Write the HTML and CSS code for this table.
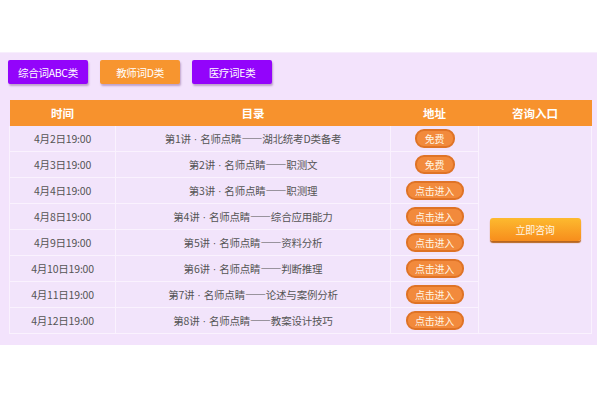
FILE: index.html
```html
<!DOCTYPE html>
<html lang="zh">
<head>
<meta charset="utf-8">
<link rel="stylesheet" href="styles.css">
</head>
<body>
<div class="page">
  <div class="panel">
    <div class="tabs">
      <span class="tab tab-purple">综合词ABC类</span>
      <span class="tab tab-orange">教师词D类</span>
      <span class="tab tab-purple">医疗词E类</span>
    </div>
    <table class="schedule">
      <colgroup>
        <col class="c-time"><col class="c-title"><col class="c-addr"><col class="c-consult">
      </colgroup>
      <thead>
        <tr><th>时间</th><th>目录</th><th>地址</th><th>咨询入口</th></tr>
      </thead>
      <tbody>
        <tr><td>4月2日19:00</td><td>第1讲<span class="dot"> · </span>名师点睛——湖北统考D类备考</td><td><span class="pill pill-free">免费</span></td><td class="consult" rowspan="8"><span class="ask">立即咨询</span></td></tr>
        <tr><td>4月3日19:00</td><td>第2讲<span class="dot"> · </span>名师点睛——职测文</td><td><span class="pill pill-free">免费</span></td></tr>
        <tr><td>4月4日19:00</td><td>第3讲<span class="dot"> · </span>名师点睛——职测理</td><td><span class="pill">点击进入</span></td></tr>
        <tr><td>4月8日19:00</td><td>第4讲<span class="dot"> · </span>名师点睛——综合应用能力</td><td><span class="pill">点击进入</span></td></tr>
        <tr><td>4月9日19:00</td><td>第5讲<span class="dot"> · </span>名师点睛——资料分析</td><td><span class="pill">点击进入</span></td></tr>
        <tr><td>4月10日19:00</td><td>第6讲<span class="dot"> · </span>名师点睛——判断推理</td><td><span class="pill">点击进入</span></td></tr>
        <tr><td>4月11日19:00</td><td>第7讲<span class="dot"> · </span>名师点睛——论述与案例分析</td><td><span class="pill">点击进入</span></td></tr>
        <tr><td>4月12日19:00</td><td>第8讲<span class="dot"> · </span>名师点睛——教案设计技巧</td><td><span class="pill">点击进入</span></td></tr>
      </tbody>
    </table>
  </div>
</div>
</body>
</html>
```

FILE: styles.css
```css
html, body {
  margin: 0;
  padding: 0;
  background: #ffffff;
}
body {
  font-family: "Noto Sans CJK SC", "Noto Sans", sans-serif;
  width: 600px;
  height: 400px;
  overflow: hidden;
}
.page {
  padding-top: 52px;
}
.panel {
  width: 597px;
  height: 293px;
  box-sizing: border-box;
  background: #f3e3fc;
  padding: 7px 6px 0 9px;
  border-top: 1px solid #f7eefd;
}
.tabs {
  display: flex;
  gap: 12px;
  margin-left: -1px;
}
.tab {
  width: 80px;
  height: 24px;
  display: flex;
  align-items: center;
  justify-content: center;
  font-size: 10.5px;
  color: #ffffff;
  box-shadow: 1px 2px 2px rgba(90, 40, 110, 0.35);
  border-radius: 2px;
  letter-spacing: -0.3px;
}
.tab-purple {
  background: #9304fb;
}
.tab-orange {
  background: #f7952f;
}
.schedule {
  margin-top: 16px;
  width: 582px;
  border-collapse: collapse;
  table-layout: fixed;
  font-size: 10.5px;
  color: #555555;
}
.c-time { width: 106px; }
.c-title { width: 275px; }
.c-addr { width: 88px; }
.c-consult { width: 113px; }
.schedule th {
  background: #f7922d;
  color: #ffffff;
  font-weight: bold;
  font-size: 11.5px;
  height: 26px;
  padding: 0;
  text-align: center;
}
.schedule td {
  height: 25px;
  padding: 0;
  text-align: center;
  border: 1px solid #faf2fe;
  background: #f2e4fb;
  white-space: nowrap;
  letter-spacing: -0.2px;
}
.schedule tbody tr:first-child td {
  border-top: none;
}
.dot {
  font-family: "Liberation Sans", sans-serif;
  letter-spacing: 0;
}
.pill {
  display: inline-flex;
  align-items: center;
  justify-content: center;
  width: 54px;
  height: 15px;
  border-radius: 9px;
  background: #f28a3c;
  border: 2px solid #df7326;
  color: #fff6e6;
  font-size: 10px;
  vertical-align: middle;
}
.pill-free {
  width: 36px;
}
.consult {
  vertical-align: middle;
}
.ask {
  display: inline-flex;
  align-items: center;
  justify-content: center;
  width: 91px;
  height: 23px;
  border-radius: 3px;
  background: linear-gradient(#fdba2f, #f78d1c);
  color: #fff7e8;
  font-size: 10px;
  box-shadow: 0 2px 1px #b8661f;
}
```
